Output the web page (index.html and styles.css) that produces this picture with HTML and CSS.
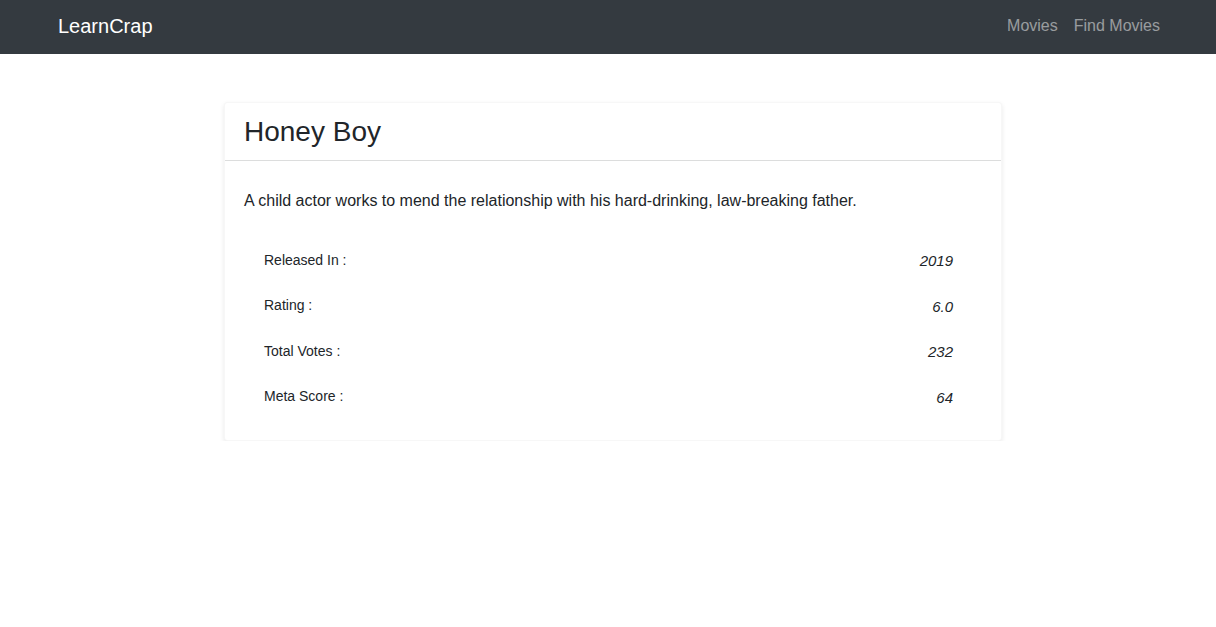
FILE: index.html
```html
<!DOCTYPE html>
<html lang="en">
<head>
<meta charset="utf-8">
<title>LearnCrap</title>
<link rel="stylesheet" href="styles.css">
</head>
<body>
<nav class="navbar">
  <a class="brand" href="#">LearnCrap</a>
  <div class="nav-links">
    <a class="nav-link" href="#">Movies</a>
    <a class="nav-link" href="#">Find Movies</a>
  </div>
</nav>
<main class="main">
  <div class="card">
    <div class="card-header">
      <h3 class="title">Honey Boy</h3>
    </div>
    <div class="card-body">
      <p class="desc">A child actor works to mend the relationship with his hard-drinking, law-breaking father.</p>
      <ul class="stats">
        <li class="stat"><span class="label">Released In :</span><span class="value">2019</span></li>
        <li class="stat"><span class="label">Rating :</span><span class="value">6.0</span></li>
        <li class="stat"><span class="label">Total Votes :</span><span class="value">232</span></li>
        <li class="stat"><span class="label">Meta Score :</span><span class="value">64</span></li>
      </ul>
    </div>
  </div>
</main>
</body>
</html>
```
FILE: styles.css
```css
* { box-sizing: border-box; }
html, body { margin: 0; padding: 0; }
body {
  font-family: "Liberation Sans", Arial, sans-serif;
  color: #212529;
  background: #fff;
  font-size: 16px;
  line-height: 1.5;
}
.navbar {
  height: 54px;
  background: #343a40;
  display: flex;
  align-items: center;
  justify-content: space-between;
  padding: 0 48px 0 58px;
}
.brand {
  color: #fff;
  font-size: 20px;
  text-decoration: none;
  line-height: 30px;
  margin-top: -2px;
}
.nav-links {
  display: flex;
  margin-top: -2px;
}
.nav-link {
  color: rgba(255, 255, 255, 0.5);
  text-decoration: none;
  font-size: 16px;
  padding: 0 8px;
}
.main {
  padding: 48px 0 0 224px;
}
.card {
  width: 778px;
  background: #fff;
  border: 1px solid rgba(0, 0, 0, 0.03);
  border-radius: 4px;
  box-shadow: 0 2px 5px rgba(0, 0, 0, 0.09);
}
.card-header {
  padding: 12px 19px 11px;
  border-bottom: 1px solid #dcdddd;
}
.title {
  margin: 0;
  font-size: 28px;
  font-weight: 400;
  line-height: 1.2;
}
.card-body {
  padding: 28px 19px 19px;
}
.desc {
  margin: 0;
  line-height: 24px;
}
.stats {
  list-style: none;
  margin: 26px 0 0;
  padding: 0 29px 0 20px;
}
.stat {
  display: flex;
  justify-content: space-between;
  align-items: center;
  height: 45.5px;
}
.label {
  font-size: 14px;
  margin-top: -2px;
}
.value {
  font-size: 15px;
  font-style: italic;
}
```
